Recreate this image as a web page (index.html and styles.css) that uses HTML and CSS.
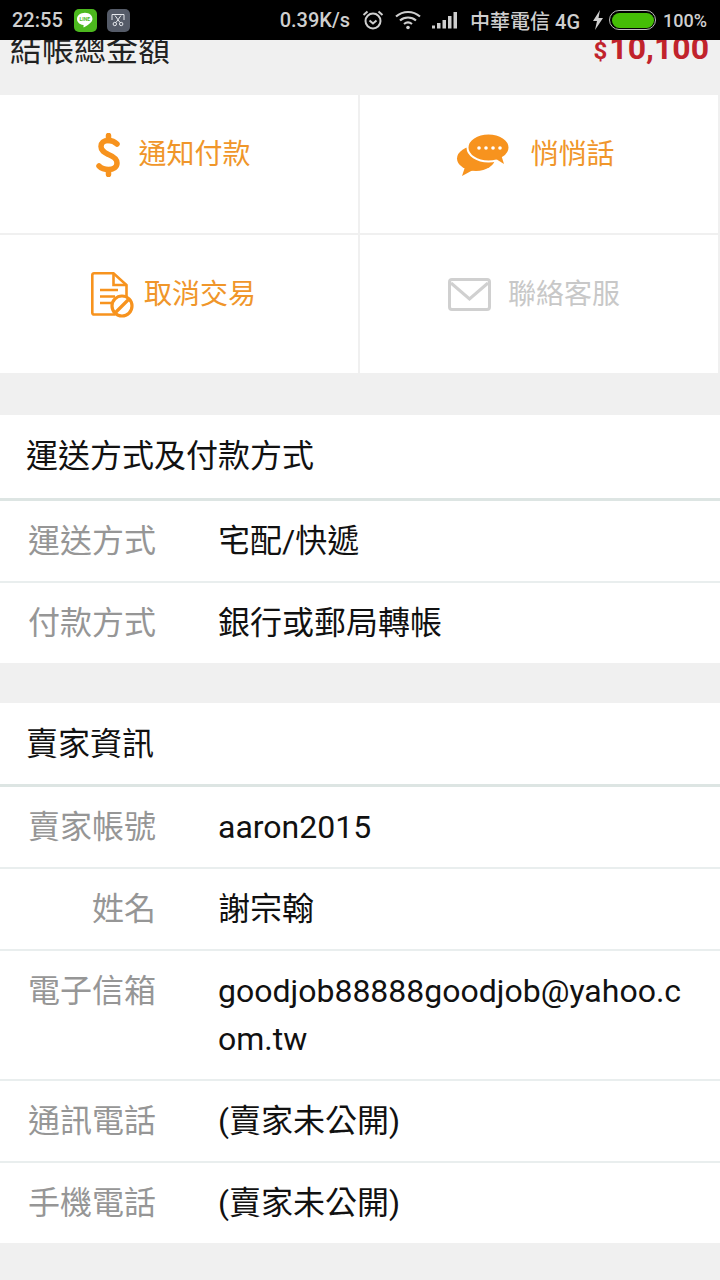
FILE: index.html
```html
<!DOCTYPE html>
<html lang="zh-Hant">
<head>
<meta charset="utf-8">
<title>交易明細</title>
<link rel="stylesheet" href="styles.css">
</head>
<body>
<header class="status">
  <div class="status-left">
    <span class="time">22:55</span>
    <span class="app app-line"><svg width="20" height="20" viewBox="0 0 18 18"><path d="M9 2.500C4.900 2.500 1.800 5 1.800 8.200c0 2.800 2.300 4.900 5.500 5.400.5.100.5.400.4.900l-.1.800c0 .4.200.5.600.3 1.900-1 5-3.100 6.200-4.500.9-1 1.300-1.900 1.300-2.900C15.700 5 13 2.500 9 2.500z" fill="#fff"/><text x="8.800" y="10" class="line-text" text-anchor="middle">LINE</text></svg></span>
    <span class="app app-cut"><svg width="16" height="16" viewBox="0 0 16 16" fill="none" stroke="#e6e8ec" stroke-width="1"><path d="M2 8V2.500h12V8"/><path d="M5 3.500l5 7M11 3.500l-5 7"/><circle cx="4.800" cy="12" r="1.700"/><circle cx="11.200" cy="12" r="1.700"/></svg></span>
  </div>
  <div class="status-right">
    <span class="speed">0.39K/s</span>
    <svg class="ic-alarm" width="22" height="22" viewBox="0 0 22 22" fill="none" stroke="#cfcfcf" stroke-width="2"><circle cx="11" cy="12" r="7.500"/><path d="M7.500 11.500l3.500 3 3.500-3"/><path d="M1.500 6l4-3.500M20.500 6l-4-3.500"/></svg>
    <svg class="ic-wifi" width="26" height="20" viewBox="0 0 26 20" fill="none" stroke="#cfcfcf" stroke-width="2.200"><path d="M1 6.500c7-6 17-6 24 0"/><path d="M5 10.500c4.500-4 11.500-4 16 0"/><path d="M9 14c2.500-2 5.500-2 8 0"/><circle cx="13" cy="17.500" r="1.800" fill="#cfcfcf" stroke="none"/></svg>
    <svg class="ic-signal" width="26" height="18" viewBox="0 0 26 18" fill="#cfcfcf"><rect x="0" y="14.500" width="3" height="3"/><rect x="5" y="12" width="3.500" height="5.500"/><rect x="10.500" y="9" width="3.500" height="8.500"/><rect x="16" y="5" width="3.500" height="12.500"/><rect x="21.500" y="1" width="3.500" height="16.500"/></svg>
    <span class="carrier">中華電信 4G</span>
    <svg class="ic-bolt" width="12" height="20" viewBox="0 0 12 20" fill="#cfcfcf"><path d="M8 0L1 11h4l-2 9 8-12H6.500z"/></svg>
    <span class="battery"><span class="battery-fill"></span></span>
    <span class="percent">100%</span>
  </div>
</header>

<main>
  <div class="total">
    <span class="total-label">結帳總金額</span>
    <span class="total-price"><small>$</small>10,100</span>
  </div>

  <section class="actions">
    <a class="action action-a">
      <svg width="25" height="44" viewBox="0 0 24 44" fill="none" stroke="#f7931e" stroke-width="5.500" stroke-linecap="round"><path d="M20.500 11C18 8.500 15 7.500 12 7.500 7 7.500 4.500 10 4.500 13.500c0 4.500 3.500 6 7.500 8 5 2 8.500 4 8.500 8.500 0 4-3.500 6.500-8.500 6.500-4 0-7-1-9.500-3.500"/><path d="M12 2.500v5M12 37v4.500"/></svg>
      <span>通知付款</span>
    </a>
    <a class="action action-b">
      <svg width="54" height="44" viewBox="0 0 54 44"><ellipse cx="20" cy="25.500" rx="19" ry="12.500" fill="#f7931e"/><path d="M9 34l-3 9 11-6z" fill="#f7931e"/><ellipse cx="32.500" cy="14.500" rx="21" ry="14" fill="#f7931e" stroke="#fff" stroke-width="2"/><path d="M40 26l8 5-2.500-8z" fill="#f7931e"/><g fill="#fff"><circle cx="23" cy="15" r="1.800"/><circle cx="30" cy="15" r="1.800"/><circle cx="37" cy="15" r="1.800"/><circle cx="44" cy="15" r="1.800"/></g></svg>
      <span>悄悄話</span>
    </a>
    <a class="action action-c">
      <svg width="43" height="46" viewBox="0 0 43 46" fill="none" stroke="#f7931e" stroke-width="2.600"><path d="M24 42.500H3c-1 0-1.700-.7-1.700-1.700V3c0-1 .7-1.700 1.700-1.700h19.500L35.500 13v13"/><path d="M22.500 1.500V13h13"/><path d="M9 18h18M9 24.500h15M9 31h13"/><circle cx="31" cy="34" r="10" fill="#fff" stroke-width="3.200"/><path d="M24 41l14-14" stroke-width="3.200"/></svg>
      <span>取消交易</span>
    </a>
    <a class="action action-d muted">
      <svg width="43" height="34" viewBox="0 0 43 34" fill="none" stroke="#d0d0d0" stroke-width="3"><rect x="1.500" y="1.500" width="40" height="30" rx="2.500"/><path d="M3 5l18.500 16L40 5"/></svg>
      <span>聯絡客服</span>
    </a>
  </section>

  <section class="card">
    <h2 class="card-title">運送方式及付款方式</h2>
    <dl class="rows">
      <div class="row"><dt>運送方式</dt><dd>宅配/快遞</dd></div>
      <div class="row"><dt>付款方式</dt><dd>銀行或郵局轉帳</dd></div>
    </dl>
  </section>

  <section class="card">
    <h2 class="card-title">賣家資訊</h2>
    <dl class="rows">
      <div class="row"><dt>賣家帳號</dt><dd>aaron2015</dd></div>
      <div class="row"><dt>姓名</dt><dd>謝宗翰</dd></div>
      <div class="row"><dt>電子信箱</dt><dd>goodjob88888goodjob@yahoo.com.tw</dd></div>
      <div class="row"><dt>通訊電話</dt><dd>(賣家未公開)</dd></div>
      <div class="row"><dt>手機電話</dt><dd>(賣家未公開)</dd></div>
    </dl>
  </section>
</main>
</body>
</html>
```

FILE: styles.css
```css
* { box-sizing: border-box; }
html, body { margin: 0; padding: 0; }
body {
  width: 720px;
  height: 1280px;
  overflow: hidden;
  background: #f0f0f0;
  font-family: Roboto, "Noto Sans CJK TC", sans-serif;
  color: #111;
}

.status {
  height: 40px;
  background: #000;
  color: #cfcfcf;
  display: flex;
  align-items: center;
  justify-content: space-between;
  padding: 0 13px 0 12px;
  font-size: 20px;
  font-weight: 500;
}
.status-left, .status-right { display: flex; align-items: center; }
.time { margin-right: 11px; }
.app {
  width: 23px;
  height: 23px;
  border-radius: 5px;
  display: flex;
  align-items: center;
  justify-content: center;
  margin-right: 10px;
}
.app-line { background: #4cb81e; }
.app-cut { background: #555b68; }
.line-text { font-size: 4.500px; font-weight: 700; fill: #4cb81e; font-family: Roboto, sans-serif; }
.speed { margin-right: 12px; }
.ic-alarm { margin-right: 11px; }
.ic-wifi { margin-right: 11px; }
.ic-signal { margin-right: 12px; }
.carrier { margin-right: 12px; font-size: 20px; }
.ic-bolt { margin-right: 5px; }
.battery {
  width: 47px;
  height: 20px;
  border: 1.500px solid #bdbdbd;
  border-radius: 10px;
  padding: 1.500px;
  display: flex;
  margin-right: 7px;
}
.battery-fill { flex: 1; background: #45bd06; border-radius: 8px; }
.percent { font-size: 18px; }

.total {
  height: 55px;
  overflow: hidden;
  display: flex;
  align-items: flex-start;
  justify-content: space-between;
  padding: 0 11px 0 10px;
  font-size: 32px;
}
.total-label { font-family: "Noto Sans CJK TC", sans-serif; font-weight: 400; line-height: 14px; color: #222; }
.total-price { color: #c1232c; font-weight: 700; line-height: 16px; }
.total-price small { font-size: 24px; margin-right: 2px; font-weight: 700; }

.actions {
  display: grid;
  grid-template-columns: 358px 358px;
  grid-auto-rows: 138px;
  gap: 2px;
  padding-bottom: 2px;
}
.action {
  background: #fff;
  display: flex;
  align-items: center;
  justify-content: center;
  font-size: 28px;
  color: #f0962a;
  padding-bottom: 24px;
}
.action svg { margin-top: 6px; }
.action-a { gap: 17px; padding-right: 11px; }
.action-b { gap: 20px; padding-right: 7px; }
.action-c { gap: 10px; padding-right: 11px; }
.action-d { gap: 17px; padding-right: 10px; color: #c8c8c8; }

.card { margin-top: 40px; background: #fff; }
.card-title {
  margin: 0;
  height: 86px;
  padding: 17px 0 0 26px;
  font-size: 32px;
  line-height: 48px;
  font-weight: 400;
  color: #111;
  border-bottom: 3px solid #dde5e3;
}
.card + .card .card-title { height: 84px; }
.rows { margin: 0; }
.row {
  display: flex;
  padding: 16px 0;
  border-bottom: 2px solid #e9eeee;
  font-size: 32px;
  line-height: 48px;
}
.row:last-child { border-bottom: 0; }
.row dt {
  width: 156px;
  flex: none;
  text-align: right;
  color: #969696;
}
.row dd {
  margin: 0 0 0 62px;
  width: 470px;
  word-break: break-all;
  color: #111;
}
```
